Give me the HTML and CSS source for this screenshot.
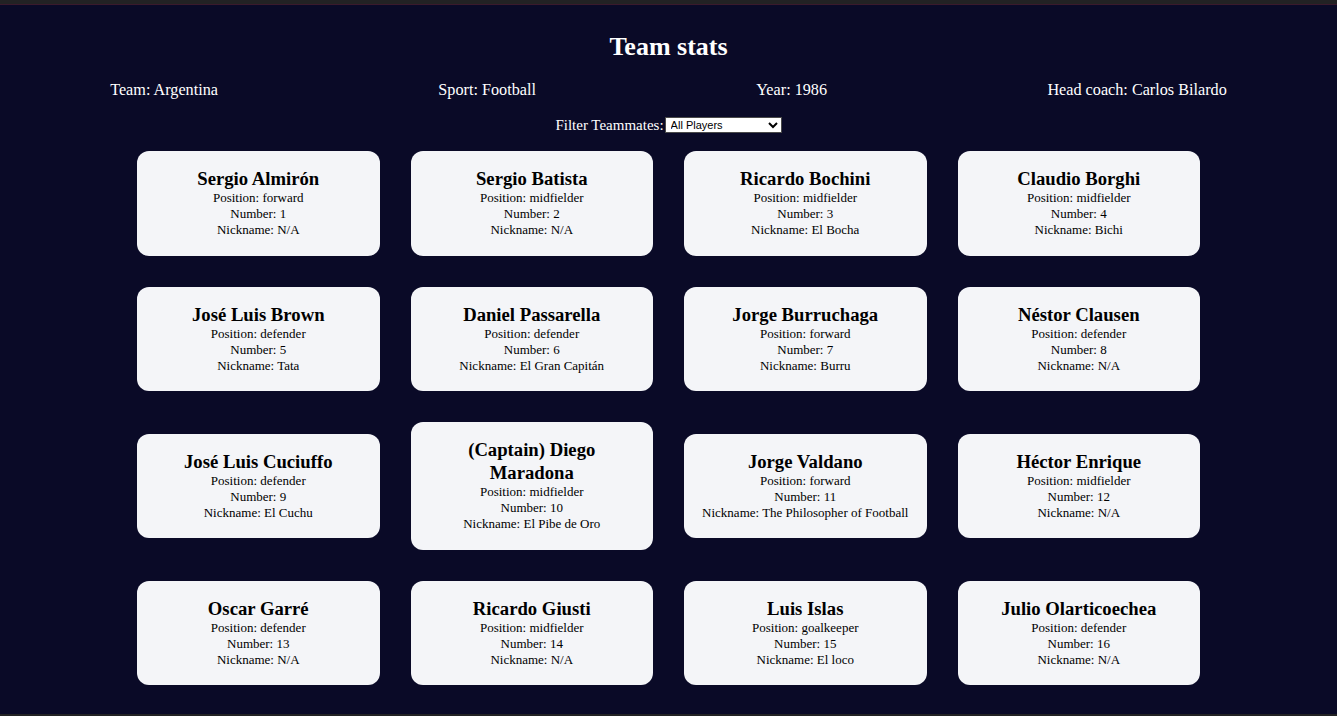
FILE: index.html
```html
<!DOCTYPE html>
<html lang="en">
<head>
<meta charset="utf-8">
<title>Team stats</title>
<link rel="stylesheet" href="styles.css">
</head>
<body>
<div class="topbar"></div>
<div class="topline"></div>
<main class="page">
  <h1 class="title">Team stats</h1>
  <div class="info">
    <span>Team: Argentina</span>
    <span>Sport: Football</span>
    <span>Year: 1986</span>
    <span>Head coach: Carlos Bilardo</span>
  </div>
  <div class="filter">
    <label for="f">Filter Teammates:</label>
    <select id="f" class="select">
      <option>All Players</option>
      <option>Forwards</option>
      <option>Midfielders</option>
      <option>Defenders</option>
      <option>Goalkeepers</option>
    </select>
  </div>
  <div class="grid">
    <div class="card"><h3 class="name">Sergio Almirón</h3><p>Position: forward</p><p>Number: 1</p><p>Nickname: N/A</p></div>
    <div class="card"><h3 class="name">Sergio Batista</h3><p>Position: midfielder</p><p>Number: 2</p><p>Nickname: N/A</p></div>
    <div class="card"><h3 class="name">Ricardo Bochini</h3><p>Position: midfielder</p><p>Number: 3</p><p>Nickname: El Bocha</p></div>
    <div class="card"><h3 class="name">Claudio Borghi</h3><p>Position: midfielder</p><p>Number: 4</p><p>Nickname: Bichi</p></div>
    <div class="card"><h3 class="name">José Luis Brown</h3><p>Position: defender</p><p>Number: 5</p><p>Nickname: Tata</p></div>
    <div class="card"><h3 class="name">Daniel Passarella</h3><p>Position: defender</p><p>Number: 6</p><p>Nickname: El Gran Capitán</p></div>
    <div class="card"><h3 class="name">Jorge Burruchaga</h3><p>Position: forward</p><p>Number: 7</p><p>Nickname: Burru</p></div>
    <div class="card"><h3 class="name">Néstor Clausen</h3><p>Position: defender</p><p>Number: 8</p><p>Nickname: N/A</p></div>
    <div class="card"><h3 class="name">José Luis Cuciuffo</h3><p>Position: defender</p><p>Number: 9</p><p>Nickname: El Cuchu</p></div>
    <div class="card"><h3 class="name">(Captain) Diego Maradona</h3><p>Position: midfielder</p><p>Number: 10</p><p>Nickname: El Pibe de Oro</p></div>
    <div class="card"><h3 class="name">Jorge Valdano</h3><p>Position: forward</p><p>Number: 11</p><p>Nickname: The Philosopher of Football</p></div>
    <div class="card"><h3 class="name">Héctor Enrique</h3><p>Position: midfielder</p><p>Number: 12</p><p>Nickname: N/A</p></div>
    <div class="card"><h3 class="name">Oscar Garré</h3><p>Position: defender</p><p>Number: 13</p><p>Nickname: N/A</p></div>
    <div class="card"><h3 class="name">Ricardo Giusti</h3><p>Position: midfielder</p><p>Number: 14</p><p>Nickname: N/A</p></div>
    <div class="card"><h3 class="name">Luis Islas</h3><p>Position: goalkeeper</p><p>Number: 15</p><p>Nickname: El loco</p></div>
    <div class="card"><h3 class="name">Julio Olarticoechea</h3><p>Position: defender</p><p>Number: 16</p><p>Nickname: N/A</p></div>
  </div>
</main>
<div class="bottombar"></div>
</body>
</html>
```

FILE: styles.css
```css
html, body {
  margin: 0;
  padding: 0;
  height: 716px;
  overflow: hidden;
}
body {
  background: #0a0a27;
  color: #ffffff;
  font-family: "Liberation Serif", "Times New Roman", serif;
  display: flex;
  flex-direction: column;
}
.topbar {
  height: 4px;
  background: #222224;
  flex: none;
}
.topline {
  height: 1px;
  background: #3a1a2c;
  flex: none;
}
.page {
  flex: 1;
  overflow: hidden;
  padding-top: 27px;
}
.title {
  margin: 0;
  font-size: 26px;
  line-height: 30px;
  text-align: center;
  font-weight: bold;
}
.info {
  display: flex;
  justify-content: space-around;
  margin-top: 19px;
  font-size: 16.2px;
  line-height: 18px;
}
.filter {
  display: flex;
  justify-content: center;
  align-items: center;
  gap: 1px;
  margin-top: 17px;
  font-size: 15px;
  line-height: 18px;
}
.select {
  width: 117px;
  height: 16px;
  font-family: "Liberation Sans", Arial, sans-serif;
  font-size: 11px;
  padding: 0 0 0 1px;
  border: 1px solid #4a4a4a;
  border-radius: 0;
  background: #ffffff;
  color: #000;
}
.grid {
  display: grid;
  grid-template-columns: repeat(4, 242.5px);
  justify-content: center;
  column-gap: 31px;
  row-gap: 31px;
  align-items: center;
  margin-top: 17px;
}
.card {
  background: #f4f5f8;
  color: #000;
  border-radius: 12px;
  padding: 16px 8px 17.5px;
  text-align: center;
}
.name {
  margin: 0;
  font-size: 18.7px;
  line-height: 23px;
  font-weight: bold;
  padding: 0 14px;
}
.card p {
  margin: 0;
  font-size: 13px;
  line-height: 16px;
}
.bottombar {
  height: 2px;
  background: #222224;
  flex: none;
}
```
